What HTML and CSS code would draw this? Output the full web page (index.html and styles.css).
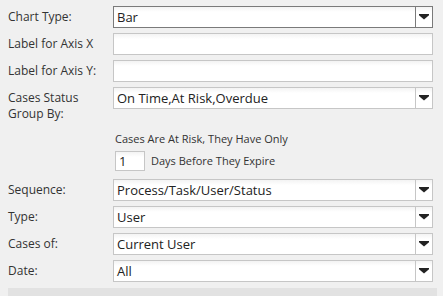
FILE: index.html
```
<!DOCTYPE html>
<html lang="en">
<head>
<meta charset="UTF-8" />
<title>Chart Settings</title>
<link rel="stylesheet" href="styles.css">
</head>
<body>
  <div class="form">
    <div class="row">
      <label class="lbl">Chart Type:</label>
      <div class="select active"><span class="val">Bar</span><span class="arrow"><svg width="10" height="6" viewBox="0 0 10 6"><path d="M0 0H10V1.2L5 5.6L0 1.2Z"/></svg></span></div>
    </div>
    <div class="row">
      <label class="lbl">Label for Axis X</label>
      <div class="field"></div>
    </div>
    <div class="row">
      <label class="lbl">Label for Axis Y:</label>
      <div class="field"></div>
    </div>
    <div class="row tall">
      <label class="lbl">Cases Status Group By:</label>
      <div class="select"><span class="val">On Time,At Risk,Overdue</span><span class="arrow"><svg width="10" height="6" viewBox="0 0 10 6"><path d="M0 0H10V1.2L5 5.6L0 1.2Z"/></svg></span></div>
    </div>
    <div class="risk">
      <div class="note">Cases Are At Risk, They Have Only</div>
      <div class="days">
        <div class="num">1</div>
        <span class="note">Days Before They Expire</span>
      </div>
    </div>
    <div class="row">
      <label class="lbl">Sequence:</label>
      <div class="select"><span class="val">Process/Task/User/Status</span><span class="arrow"><svg width="10" height="6" viewBox="0 0 10 6"><path d="M0 0H10V1.2L5 5.6L0 1.2Z"/></svg></span></div>
    </div>
    <div class="row">
      <label class="lbl">Type:</label>
      <div class="select"><span class="val">User</span><span class="arrow"><svg width="10" height="6" viewBox="0 0 10 6"><path d="M0 0H10V1.2L5 5.6L0 1.2Z"/></svg></span></div>
    </div>
    <div class="row">
      <label class="lbl">Cases of:</label>
      <div class="select"><span class="val">Current User</span><span class="arrow"><svg width="10" height="6" viewBox="0 0 10 6"><path d="M0 0H10V1.2L5 5.6L0 1.2Z"/></svg></span></div>
    </div>
    <div class="row">
      <label class="lbl">Date:</label>
      <div class="select"><span class="val">All</span><span class="arrow"><svg width="10" height="6" viewBox="0 0 10 6"><path d="M0 0H10V1.2L5 5.6L0 1.2Z"/></svg></span></div>
    </div>
  </div>
  <div class="bar"></div>
</body>
</html>
```

FILE: styles.css
```
body {
  margin: 0;
  padding: 6px 0 0 8px;
  background: #f0f0f0;
  font-family: 'Open Sans', sans-serif;
  color: #333;
  overflow: hidden;
}
.form {
  display: flex;
  flex-direction: column;
  gap: 5px;
}
.row {
  display: grid;
  grid-template-columns: 105px 320px;
  align-items: start;
}
.lbl {
  font-size: 12px;
  line-height: 16px;
  padding-top: 3px;
}
.row.tall .lbl {
  width: 90px;
}
.field, .select, .num {
  box-sizing: border-box;
  height: 22px;
  border: 1px solid #c6c6c6;
  background: linear-gradient(#f3f3f3, #fff 5px);
}
.select {
  display: flex;
  align-items: stretch;
}
.select.active {
  border-color: #7a7a7a;
}
.val {
  flex: 1;
  font-size: 13px;
  line-height: 20px;
  padding-left: 3px;
  color: #222;
}
.arrow {
  width: 16px;
  border-left: 1px solid #c6c6c6;
  display: flex;
  align-items: center;
  justify-content: center;
}
.select.active .arrow {
  border-left-color: #7a7a7a;
}
.arrow svg {
  fill: #222;
}
.risk {
  margin: 4px 0 3px 107px;
  display: flex;
  flex-direction: column;
  gap: 4px;
}
.note {
  font-size: 11px;
  line-height: 16px;
}
.days {
  display: flex;
  align-items: center;
  gap: 6px;
}
.num {
  width: 30px;
  height: 20px;
  font-size: 13px;
  line-height: 18px;
  padding-left: 3px;
  color: #222;
}
.bar {
  margin-top: 6px;
  width: 429px;
  height: 10px;
  background: #e2e2e2;
}
```
